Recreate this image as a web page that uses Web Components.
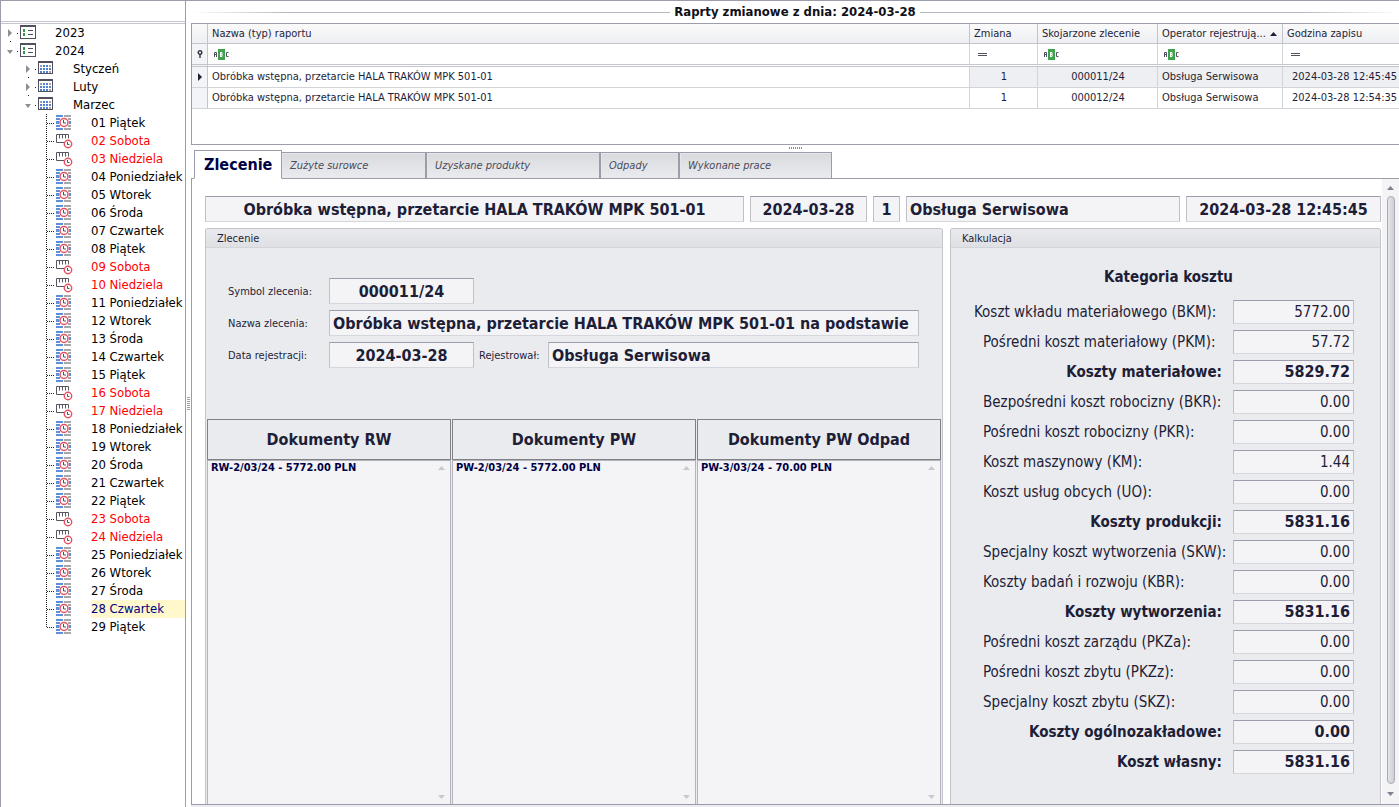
<!DOCTYPE html>
<html lang="pl">
<head>
<meta charset="utf-8">
<title>Raporty zmianowe</title>
<style>
:root{--line:#9c9caa;--soft:#c3c4cc;--ink:#1e1e37;--panel:#eaebef;--field:#f4f4f7}
html,body{margin:0;height:100%}
body{font:11px/14px "DejaVu Sans Condensed","DejaVu Sans",sans-serif;color:var(--ink);background:#fff;overflow:hidden}
</style>
</head>
<body>
<shift-app>
  <report-tree slot="nav"></report-tree>
  <caption-line slot="main">Raprty zmianowe z dnia: 2024-03-28</caption-line>
  <report-grid slot="main"></report-grid>
  <split-grip slot="main"></split-grip>
  <tab-strip slot="main"></tab-strip>
  <tab-pane slot="main">
    <record-header slot="head"></record-header>
    <group-panel heading="Zlecenie"><order-form></order-form><order-docs></order-docs></group-panel>
    <group-panel heading="Kalkulacja"><cost-list></cost-list></group-panel>
  </tab-pane>
</shift-app>
<script>
const define = (name, render) => customElements.define(name, class extends HTMLElement {
  connectedCallback() {
    if (this.shadowRoot) return;
    this.attachShadow({ mode: 'open' }).innerHTML = '<style>*,:host{box-sizing:border-box}</style>' + render(this);
  }
});

define('shift-app', () => `
<style>
:host{display:grid;grid-template-columns:186px 5px minmax(0,1fr);height:100vh}
nav{border:1px solid var(--line);border-bottom:0;min-width:0;overflow:hidden}
.split{border-top:1px solid var(--line);display:grid;place-items:center}
main{display:flex;flex-direction:column;border-top:1px solid var(--line);min-width:0;min-height:0;padding-bottom:2px;background:linear-gradient(to top,#ececf0 2px,#fff 2px)}
</style>
<nav aria-label="Kalendarz"><slot name="nav"></slot></nav>
<div class="split"><split-grip vertical></split-grip></div>
<main><slot name="main"></slot></main>`);

define('split-grip', el => el.hasAttribute('vertical') ? `
<style>:host{display:block;width:3px;height:14px;background:repeating-linear-gradient(#a0a0ac 0 1px,#fff 1px 2px)}</style>` : `
<style>:host{display:flex;justify-content:center;flex:none;height:5px;padding-top:2px}
i{width:13px;height:2px;background:repeating-linear-gradient(90deg,#8c8c99 0 1px,#fff 1px 2px)}</style><i></i>`);

define('caption-line', () => `
<style>
:host{display:flex;flex:none;align-items:center;height:22px;gap:4px;font-size:13px;line-height:16px;font-weight:bold;color:#101018}
i{flex:1;height:1px;background:linear-gradient(90deg,#fff,#b8b8c2 20%)}
i:last-child{background:linear-gradient(270deg,#fff,#b8b8c2 20%)}
h1{font:inherit;margin:0}
</style><i></i><h1><slot></slot></h1><i></i>`);

const icons = {
  year: `<rect x=".5" y=".5" width="15" height="13" fill="#fff" stroke="#50505f"/><path d="M0 0h16v2H0z" fill="#50505f"/><rect x="3" y="4" width="2" height="3" fill="#2f9a48"/><rect x="3" y="8" width="2" height="3" fill="#2f9a48"/><path d="M8 5.500h5M8 9.500h5" stroke="#50505f"/>`,
  month: `<rect x=".5" y=".5" width="14" height="12" fill="#fff" stroke="#50505f"/><path d="M0 0h15v2H0z" fill="#50505f"/><g fill="#4f83d2"><path d="M5 4h2v2H5zM8 4h2v2H8zM2 7h2v2H2zM5 7h2v2H5zM8 7h2v2H8zM11 7h2v2h-2zM2 10h2v2H2zM5 10h2v2H5zM8 10h2v2H8z"/></g><path d="M2 4h2v2H2zM11 4h2v2h-2zM11 10h2v2h-2z" fill="#9da3ae"/>`,
  work: `<g fill="#5f8fd8"><path d="M0 0h7v2H0zM0 3h4v2H0zM0 6h3v3H0zM0 10h4v2H0zM0 13h7v2H0zM13 6h2v3h-2z"/></g><path d="M8 0h7v2H8zM12 3h3v2h-3zM12 10h3v2h-3zM8 13h7v2H8z" fill="#a6a6ab"/><circle cx="8" cy="7.5" r="4" fill="#fff" stroke="#e5505f" stroke-width="1.5"/><path d="M7.500 5v3H10" fill="none" stroke="#50505f"/>`,
  free: `<path d="M8 9.500H.5v-8h12v4M3.500 1.500v4M6.500 1.500v4M9.500 1.500v4" fill="none" stroke="#565663"/><circle cx="12" cy="11" r="3.700" fill="#fff" stroke="#e5505f" stroke-width="1.400"/><path d="M11.500 9v2.500h2" fill="none" stroke="#50505f"/>`
};
const right = x => `<path d="M${x} 5v8l4-4z" fill="#8d8d96"/>`;
const down = x => `<path d="M${x} 8h6l-3 4z" fill="#8d8d96"/>`;
const dot = (x, y) => `<rect x="${x}" y="${y}" width="1" height="1" fill="#222"/>`;
const leads = {
  closedYear: [19, right(7) + dot(16, 9) + dot(9, 17)],
  openYear: [19, down(6) + dot(16, 9)],
  closedMonth: [37, right(25) + dot(34, 9) + dot(27, 17)],
  openMonth: [37, down(24) + dot(34, 9)],
  day: [55, '<path d="M45.500 0v18M46 9.500h8" stroke="#222" stroke-dasharray="1 1"/>'],
  lastDay: [55, '<path d="M45.500 0v10M46 9.500h8" stroke="#222" stroke-dasharray="1 1"/>']
};
define('tree-row', el => {
  const [w, art] = leads[el.getAttribute('lead')];
  return `
<style>
:host{display:flex;align-items:center;height:18px;font-size:13px;line-height:18px;color:#000;white-space:nowrap}
:host([icon=free]){color:#f00}
:host([selected]){color:#000080}
:host([selected]) span{background:#fff8cd}
svg{flex:none;display:block}
.icon{margin:0 19px 1px 0;overflow:visible}
span{flex:1}
</style>
<svg width="${w}" height="18" aria-hidden="true">${art}</svg><svg class="icon" width="16" height="15" aria-hidden="true">${icons[el.getAttribute('icon')]}</svg><span><slot></slot></span>`;
});
define('report-tree', () => {
  const names = ['Piątek', 'Sobota', 'Niedziela', 'Poniedziałek', 'Wtorek', 'Środa', 'Czwartek'];
  const row = (lead, icon, text, extra = '') => `<tree-row role="treeitem" lead="${lead}" icon="${icon}" ${extra}>${text}</tree-row>`;
  let rows = row('closedYear', 'year', '2023') + row('openYear', 'year', '2024')
    + row('closedMonth', 'month', 'Styczeń') + row('closedMonth', 'month', 'Luty') + row('openMonth', 'month', 'Marzec');
  for (let d = 1; d <= 29; d++) {
    const k = (d - 1) % 7;
    rows += row(d === 29 ? 'lastDay' : 'day', k === 1 || k === 2 ? 'free' : 'work', String(d).padStart(2, '0') + ' ' + names[k], d === 28 ? 'selected' : '');
  }
  return `<style>:host{display:block}.bar{height:23px;border-bottom:3px double var(--soft)}</style><div class="bar"></div><div role="tree">${rows}</div>`;
});

define('report-grid', () => {
  const abc = '<svg width="16" height="11" aria-hidden="true"><rect x="5" width="7" height="11" fill="#3fa34d"/><g fill="none" stroke="#50505f"><path d="M1.500 8V3.500h2V8M1.500 5.500h2M15.500 3.500h-2v4h2"/></g><path d="M7.500 3v5M7 3.500h2v4H7M7 5.500h2" fill="none" stroke="#fff"/></svg>';
  const eq = '<svg width="10" height="11" aria-hidden="true"><path d="M1 4.500h9M1 6.500h9" stroke="#50505f"/></svg>';
  const cols = ['Nazwa (typ) raportu', 'Zmiana', 'Skojarzone zlecenie', 'Operator rejestrują...', 'Godzina zapisu'];
  const kinds = [abc, eq, abc, abc, eq];
  const data = [['1', '000011/24', 'Obsługa Serwisowa', '2024-03-28 12:45:45'], ['1', '000012/24', 'Obsługa Serwisowa', '2024-03-28 12:54:35']];
  return `
<style>
:host{display:block;flex:none;height:122px;border:1px solid var(--line);border-right:0}
table{table-layout:fixed;width:100%;border-spacing:0}
.mark{width:16px}.shift{width:68px}.order{width:120px}.who{width:125px}.time{width:116px}
th,td{padding:0 3px 0 4px;font-weight:normal;text-align:left;border:0 solid #d3d4da;border-right-width:1px;white-space:nowrap;overflow:hidden}
th:last-child,td:last-child{border-right:0}
th{height:20px;line-height:18px;border-color:var(--soft);border-bottom-width:1px;background:linear-gradient(#fafafb,#eeeff2)}
.filter td{height:23px;border-bottom:3px double var(--soft)}
tr:not(.filter) td{height:21px;border-bottom-width:1px}
td:first-child{background:#f3f4f7;border-right-color:var(--soft);padding:0}
td:first-child svg{margin:auto}
.current td:nth-child(n+3){background:#eeeff2}
td:nth-child(3),td:nth-child(4){text-align:center}
tr:not(.filter) td:nth-child(6){padding-left:9px;padding-right:0}
.box{display:flex;align-items:center;gap:4px;padding-left:1px}
.box.eq{padding-left:3px}
input{flex:1;min-width:0;width:0;border:0;padding:0;background:none;font:inherit;height:16px;outline:0}
svg{display:block;flex:none}
.sort{display:flex;align-items:center;justify-content:space-between;padding-right:2px}
</style>
<table aria-label="Raporty zmianowe">
<colgroup><col class="mark"><col><col class="shift"><col class="order"><col class="who"><col class="time"></colgroup>
<thead><tr><th></th>${cols.map((c, i) => `<th scope="col">${i === 3 ? `<div class="sort"><span>${c}</span><svg width="7" height="4" aria-hidden="true"><path d="M0 4h7L3.500 0z" fill="#1e1e37"/></svg></div>` : c}</th>`).join('')}</tr></thead>
<tbody><tr class="filter"><td><svg width="6" height="8" aria-hidden="true"><circle cx="3" cy="2.500" r="1.800" fill="none" stroke="#333342" stroke-width="1.400"/><path d="M3 4v4" stroke="#333342" stroke-width="1.400"/></svg></td>${kinds.map((k, i) => `<td><div class="box${k === eq ? ' eq' : ''}">${k}<input aria-label="Filtr: ${cols[i]}"></div></td>`).join('')}</tr>
${data.map((r, i) => `<tr class="${i ? '' : 'current'}"><td>${i ? '' : '<svg width="4" height="8" aria-hidden="true"><path d="M0 0v8l4-4z" fill="#1e1e37"/></svg>'}</td><td>Obróbka wstępna, przetarcie HALA TRAKÓW MPK 501-01</td>${r.map(c => `<td>${c}</td>`).join('')}</tr>`).join('')}</tbody>
</table>`;
});

define('tab-strip', () => `
<style>
:host{display:flex;flex:none;align-items:flex-end;padding-left:3px;margin-bottom:-1px;position:relative}
button{font:inherit;font-style:italic;text-align:left;color:#4a4a5a;height:27px;padding:0 8px;margin:0;border:1px solid var(--line);border-radius:0;background:linear-gradient(#d9dade,#eaebef);box-shadow:inset 1px 1px #e6e7ea}
button[aria-selected=true]{width:88px;height:29px;padding:0 9px;border-bottom-color:#fff;background:#fff;box-shadow:none;font-size:16px;font-style:normal;font-weight:bold;color:#000046}
.a{width:144px;border-left:0}.b{width:174px}.c{width:79px}.d{width:153px}
</style>
<button role="tab" aria-selected="true">Zlecenie</button><button role="tab" class="a">Zużyte surowce</button><button role="tab" class="b">Uzyskane produkty</button><button role="tab" class="c">Odpady</button><button role="tab" class="d">Wykonane prace</button>`);

define('tab-pane', () => `
<style>
:host{display:flex;flex:1;min-height:0;border:1px solid var(--line);border-right:0}
.body{flex:1;min-width:0;display:flex;flex-direction:column;gap:6px;padding:17px 1px 0 13px}
.groups{flex:1;min-height:0;display:grid;grid-template-columns:738fr 431fr;grid-template-rows:minmax(0,1fr);gap:7px}
.scroll{width:17px;display:flex;flex-direction:column;align-items:center;background:var(--field)}
button{width:17px;height:17px;padding:0;border:0;background:none;display:grid;place-items:center}
button:last-child{height:20px}
.thumb{flex:1;width:8px;border:1px solid #a9a9b3;border-radius:4px;background:linear-gradient(90deg,#e4e5e9,#cfd0d6)}
</style>
<div class="body"><slot name="head"></slot><div class="groups"><slot></slot></div></div>
<div class="scroll">
<button aria-label="W górę"><svg width="7" height="4"><path d="M0 4h7L3.500 0z" fill="#808090"/></svg></button>
<div class="thumb"></div>
<button aria-label="W dół"><svg width="7" height="4"><path d="M0 0h7L3.500 4z" fill="#808090"/></svg></button>
</div>`);

define('value-field', el => {
  const label = el.getAttribute('label');
  return `
<style>
:host{display:flex;align-items:center;min-width:0}
label{flex:none;width:var(--label-width,auto);padding-top:2px}
input{flex:1;width:0;min-width:0;height:26px;padding:0 3px;border:1px solid #bfc0c8;border-top-color:var(--line);border-bottom-color:#d6d7dc;border-radius:0;background:var(--field);color:inherit;font:bold 16px "DejaVu Sans Condensed","DejaVu Sans",sans-serif;outline:0}
:host([center]) input{text-align:center}
</style>
${label ? `<label for="v">${label}</label>` : ''}<input id="v" readonly value="${el.getAttribute('value')}"${label ? '' : ` aria-label="${el.getAttribute('hint')}"`}>`;
});

define('record-header', () => `
<style>:host{display:grid;flex:none;grid-template-columns:minmax(0,1fr) 117px 27px 274px 195px;gap:6px}</style>
<value-field center hint="Raport" value="Obróbka wstępna, przetarcie HALA TRAKÓW MPK 501-01"></value-field>
<value-field center hint="Data" value="2024-03-28"></value-field>
<value-field center hint="Zmiana" value="1"></value-field>
<value-field hint="Operator" value="Obsługa Serwisowa"></value-field>
<value-field center hint="Godzina zapisu" value="2024-03-28 12:45:45"></value-field>`);

define('group-panel', el => `
<style>
:host{display:flex;flex-direction:column;min-width:0;border:1px solid var(--soft);border-bottom:0;border-radius:3px 3px 0 0;background:var(--panel);overflow:hidden}
h2{flex:none;margin:0;height:19px;padding:0 11px;font:inherit;line-height:19px;border-bottom:1px solid #d3d4da;background:linear-gradient(#e9eaed,#dfe0e4)}
</style><h2>${el.getAttribute('heading')}</h2><slot></slot>`);

define('order-form', () => `
<style>
:host{display:grid;flex:none;gap:6px;padding:30px 23px 0 22px}
value-field{--label-width:101px}
.short{width:246px}
.pair{display:flex;gap:5px}
.pair .short{flex:none}
.grow{flex:1;--label-width:69px}
</style>
<value-field class="short" center label="Symbol zlecenia:" value="000011/24"></value-field>
<value-field label="Nazwa zlecenia:" value="Obróbka wstępna, przetarcie HALA TRAKÓW MPK 501-01 na podstawie"></value-field>
<div class="pair"><value-field class="short" center label="Data rejestracji:" value="2024-03-28"></value-field><value-field class="grow" label="Rejestrował:" value="Obsługa Serwisowa"></value-field></div>`);

define('order-docs', () => {
  const docs = [['Dokumenty RW', 'RW-2/03/24 - 5772.00 PLN'], ['Dokumenty PW', 'PW-2/03/24 - 5772.00 PLN'], ['Dokumenty PW Odpad', 'PW-3/03/24 - 70.00 PLN']];
  return `
<style>
:host{display:grid;flex:1;min-height:0;grid-template-columns:repeat(3,minmax(0,1fr));gap:1px;margin-top:51px;padding:0 1px}
section{display:flex;flex-direction:column;min-height:0}
h3{flex:none;margin:0;height:41px;border:1px solid #808085;font-size:16px;line-height:40px;text-align:center}
.list{flex:1;display:flex;justify-content:space-between;min-height:0;padding:0 5px 0 3px;border:1px solid #b3b5be;border-bottom:0;background:var(--field)}
ul{list-style:none;margin:0;padding:0;font-weight:bold;color:#000046;line-height:14px}
.bar{display:flex;flex-direction:column;justify-content:space-between;padding:5px 0}
</style>
${docs.map(([h, t]) => `<section><h3>${h}</h3><div class="list"><ul><li>${t}</li></ul><div class="bar"><svg width="7" height="4" aria-hidden="true"><path d="M0 4h7L3.500 0z" fill="#c8c9ce"/></svg><svg width="7" height="4" aria-hidden="true"><path d="M0 0h7L3.500 4z" fill="#c8c9ce"/></svg></div></div></section>`).join('')}`;
});

define('cost-list', () => {
  const rows = [['Koszt wkładu materiałowego (BKM):', '5772.00', 'lead'], ['Pośredni koszt materiałowy (PKM):', '57.72'], ['Koszty materiałowe:', '5829.72', 'sum'],
    ['Bezpośredni koszt robocizny (BKR):', '0.00'], ['Pośredni koszt robocizny (PKR):', '0.00'], ['Koszt maszynowy (KM):', '1.44'], ['Koszt usług obcych (UO):', '0.00'], ['Koszty produkcji:', '5831.16', 'sum'],
    ['Specjalny koszt wytworzenia (SKW):', '0.00'], ['Koszty badań i rozwoju (KBR):', '0.00'], ['Koszty wytworzenia:', '5831.16', 'sum'],
    ['Pośredni koszt zarządu (PKZa):', '0.00'], ['Pośredni koszt zbytu (PKZz):', '0.00'], ['Specjalny koszt zbytu (SKZ):', '0.00'], ['Koszty ogólnozakładowe:', '0.00', 'sum'], ['Koszt własny:', '5831.16', 'sum']];
  return `
<style>
:host{display:block;padding:14px 26px 0 32px;font-size:15px;line-height:30px}
h3{margin:0 0 5px;font:inherit;font-weight:bold;text-align:center}
.row{display:grid;grid-template-columns:minmax(0,1fr) 121px;align-items:center;height:30px;white-space:nowrap}
.lead label{margin-left:-9px}
.sum label{text-align:right;padding-right:11px}
.sum{font-weight:bold}
input{width:100%;height:24px;padding:0 3px;border:1px solid #bfc0c8;border-top-color:var(--line);border-bottom-color:#d6d7dc;background:var(--field);color:inherit;font:inherit;text-align:right;outline:0}
.sum input{font-size:16px}
</style>
<h3>Kategoria kosztu</h3>
${rows.map(([l, v, k], i) => `<div class="row ${k || ''}"><label for="c${i}">${l}</label><input id="c${i}" readonly value="${v}"></div>`).join('')}`;
});
</script>
</body>
</html>
